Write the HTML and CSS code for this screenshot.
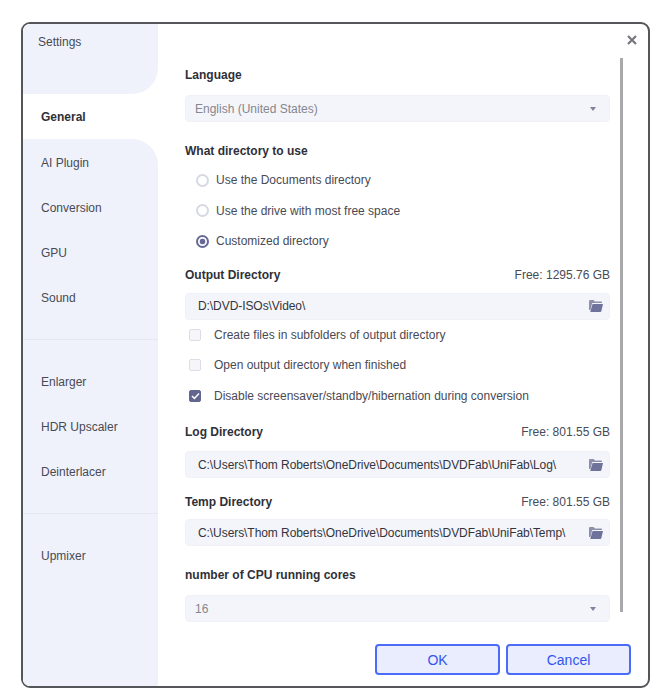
FILE: index.html
```html
<!DOCTYPE html>
<html lang="en">
<head>
<meta charset="utf-8">
<title>Settings</title>
<link rel="stylesheet" href="styles.css">
</head>
<body>
<div class="dialog">
  <aside class="sidebar">
    <div class="side-title"><span>Settings</span></div>
    <div class="nav-active">General</div>
    <div class="side-rest">
      <nav class="group group-first">
        <a>AI Plugin</a>
        <a>Conversion</a>
        <a>GPU</a>
        <a>Sound</a>
      </nav>
      <nav class="group">
        <a>Enlarger</a>
        <a>HDR Upscaler</a>
        <a>Deinterlacer</a>
      </nav>
      <nav class="group">
        <a>Upmixer</a>
      </nav>
    </div>
  </aside>
  <main class="main">
    <button class="close" aria-label="Close">
      <svg width="10" height="10" viewBox="0 0 10 10"><path d="M1 1l8 8M9 1l-8 8" stroke="#77777f" stroke-width="2.2" fill="none"/></svg>
    </button>
    <div class="scrollbar"></div>
    <div class="content">
      <h3 class="label l-language">Language</h3>
      <div class="field select"><span>English (United States)</span><i class="caret"></i></div>

      <h3 class="label l-what">What directory to use</h3>
      <div class="radios">
        <label class="opt"><i class="radio"></i>Use the Documents directory</label>
        <label class="opt"><i class="radio"></i>Use the drive with most free space</label>
        <label class="opt"><i class="radio on"></i>Customized directory</label>
      </div>

      <div class="label-row l-output"><h3 class="label">Output Directory</h3><span class="free">Free: 1295.76 GB</span></div>
      <div class="field path p-output"><span>D:\DVD-ISOs\Video\</span>
        <svg class="folder" width="14" height="12" viewBox="0 0 14 12"><path d="M0 1.2C0 .5.5 0 1.2 0h3.4l1.3 1.6h6c.7 0 1.1.4 1.1 1V3H3.2L1.6 9.8 0 10z" fill="#8d90ad"/><path d="M3.6 4H14l-1.6 6.9c-.1.7-.5 1.1-1.2 1.1H1.2z" fill="#6f739b"/></svg>
      </div>
      <div class="checks">
        <label class="chk"><i class="box"></i>Create files in subfolders of output directory</label>
        <label class="chk"><i class="box"></i>Open output directory when finished</label>
        <label class="chk"><i class="box on"><svg width="9" height="8" viewBox="0 0 9 8"><path d="M1 4l2.4 2.4L8 1.4" stroke="#fff" stroke-width="1.5" fill="none"/></svg></i>Disable screensaver/standby/hibernation during conversion</label>
      </div>

      <div class="label-row l-log"><h3 class="label">Log Directory</h3><span class="free">Free: 801.55 GB</span></div>
      <div class="field path p-log"><span>C:\Users\Thom Roberts\OneDrive\Documents\DVDFab\UniFab\Log\</span>
        <svg class="folder" width="14" height="12" viewBox="0 0 14 12"><path d="M0 1.2C0 .5.5 0 1.2 0h3.4l1.3 1.6h6c.7 0 1.1.4 1.1 1V3H3.2L1.6 9.8 0 10z" fill="#8d90ad"/><path d="M3.6 4H14l-1.6 6.9c-.1.7-.5 1.1-1.2 1.1H1.2z" fill="#6f739b"/></svg>
      </div>

      <div class="label-row l-temp"><h3 class="label">Temp Directory</h3><span class="free">Free: 801.55 GB</span></div>
      <div class="field path p-temp"><span>C:\Users\Thom Roberts\OneDrive\Documents\DVDFab\UniFab\Temp\</span>
        <svg class="folder" width="14" height="12" viewBox="0 0 14 12"><path d="M0 1.2C0 .5.5 0 1.2 0h3.4l1.3 1.6h6c.7 0 1.1.4 1.1 1V3H3.2L1.6 9.8 0 10z" fill="#8d90ad"/><path d="M3.6 4H14l-1.6 6.9c-.1.7-.5 1.1-1.2 1.1H1.2z" fill="#6f739b"/></svg>
      </div>

      <h3 class="label l-cores">number of CPU running cores</h3>
      <div class="field select s-cores"><span>16</span><i class="caret"></i></div>
    </div>
    <footer class="footer">
      <button class="btn">OK</button>
      <button class="btn">Cancel</button>
    </footer>
  </main>
</div>
</body>
</html>
```
FILE: styles.css
```css
* { box-sizing: border-box; }
html, body { margin: 0; padding: 0; background: #fff; }
body {
  width: 661px;
  height: 700px;
  padding: 22px 0 0 21px;
  font-family: "Liberation Sans", Arial, sans-serif;
  font-size: 12px;
  color: #484a54;
}
.dialog {
  width: 629px;
  height: 666px;
  border: 2px solid #55565a;
  border-radius: 9px;
  background: #fff;
  display: flex;
  overflow: hidden;
}
.sidebar {
  width: 135px;
  flex: none;
  display: flex;
  flex-direction: column;
  background: #fff;
}
.side-title {
  height: 70px;
  flex: none;
  padding: 11px 0 0 15px;
  line-height: 14px;
  background: #eff2fb;
  border-bottom-right-radius: 26px;
}
.nav-active {
  height: 45px;
  flex: none;
  padding-left: 18px;
  line-height: 47px;
  font-weight: 700;
  color: #2f3038;
}
.side-rest {
  flex: 1;
  background: #eff2fb;
  border-top-right-radius: 26px;
}
.group {
  display: flex;
  flex-direction: column;
  padding: 19px 0;
  border-top: 1px solid #e4e8f2;
}
.group-first { padding: 1px 0 19px; border-top: 0; }
.group a {
  height: 45px;
  line-height: 46px;
  padding-left: 18px;
}
.main {
  flex: 1;
  position: relative;
  display: flex;
  flex-direction: column;
  padding-left: 27px;
  min-width: 0;
}
.close {
  position: absolute;
  top: 11px;
  right: 11px;
  width: 10px;
  height: 10px;
  padding: 0;
  border: 0;
  background: none;
  display: flex;
}
.scrollbar {
  position: absolute;
  left: 462px;
  top: 34px;
  width: 3px;
  height: 554px;
  background: #a9a9ab;
}
.content { width: 425px; flex: 1; padding-top: 44px; }
.label {
  margin: 0;
  font-size: 12px;
  line-height: 14px;
  font-weight: 700;
  color: #2f3038;
}
.label-row { display: flex; justify-content: space-between; align-items: center; }
.free { line-height: 14px; }
.field {
  height: 27px;
  display: flex;
  align-items: center;
  justify-content: space-between;
  border: 1px solid #f0f1f7;
  border-radius: 4px;
  background: #f4f5fa;
}
.select { margin-top: 13px; padding: 0 13px 0 9px; color: #85868f; }
.path { padding: 0 6px 0 12px; color: #33343c; letter-spacing: -0.07px; }
.caret {
  width: 0;
  height: 0;
  border-left: 3.5px solid transparent;
  border-right: 3.5px solid transparent;
  border-top: 4px solid #80829c;
}
.l-what { margin-top: 22px; }
.radios { margin-top: 7px; padding-left: 11px; display: flex; flex-direction: column; }
.opt, .chk { display: flex; align-items: center; height: 30.5px; }
.radio {
  width: 13px;
  height: 13px;
  margin-right: 7px;
  border: 2px solid #d6d8e2;
  border-radius: 50%;
  background: #fff;
}
.radio.on {
  border-color: #666a94;
  background: radial-gradient(circle, #666a94 0 2.6px, #fff 3.2px);
}
.l-output { margin-top: 11px; }
.p-output { margin-top: 11px; }
.checks { padding-left: 4px; display: flex; flex-direction: column; }
.box {
  width: 12px;
  height: 12px;
  margin-right: 13px;
  border: 1px solid #dcdde7;
  border-radius: 2px;
  background: #f6f6fa;
  display: flex;
  align-items: center;
  justify-content: center;
}
.box.on { background: #62668f; border-color: #62668f; }
.l-log { margin-top: 14px; }
.p-log { margin-top: 12px; }
.l-temp { margin-top: 17px; }
.p-temp { margin-top: 10px; }
.l-cores { margin-top: 22px; }
.s-cores { margin-top: 13px; }
.footer {
  position: absolute;
  right: 17px;
  bottom: 11px;
  display: flex;
  gap: 6px;
}
.btn {
  width: 125px;
  height: 31px;
  padding: 0;
  border: 2px solid #4a6cf7;
  border-radius: 4px;
  background: #e9edfd;
  color: #3355ee;
  font: 14px "Liberation Sans", Arial, sans-serif;
}
```
